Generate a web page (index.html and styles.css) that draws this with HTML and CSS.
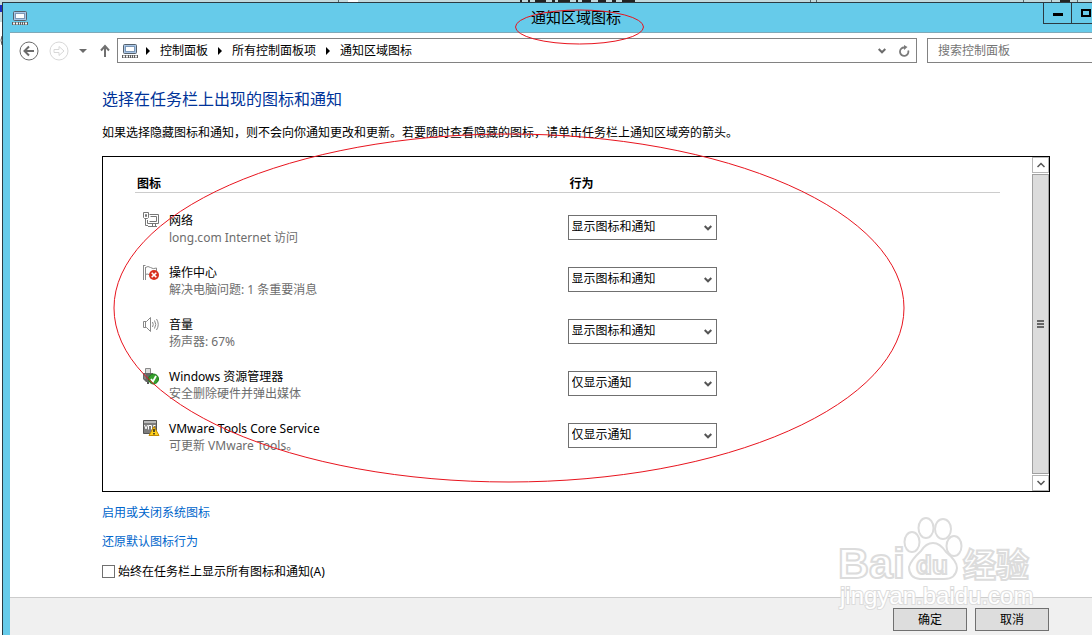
FILE: index.html
```html
<!DOCTYPE html>
<html lang="zh-CN">
<head>
  <meta charset="UTF-8">
  <meta name="viewport" content="width=device-width, initial-scale=1.0">
  <title>通知区域图标</title>
  <link rel="stylesheet" href="styles.css">
</head>
<body>
  <!-- shared icon shapes -->
  <svg class="sprite" width="0" height="0" aria-hidden="true">
    <symbol id="i-taskbar" viewBox="0 0 18 16">
      <rect x="2.5" y="1.5" width="13" height="9" rx="1" fill="#a9c6e6" stroke="#56616c"/>
      <rect x="4.5" y="3.5" width="9" height="5" fill="#fff" stroke="#7c98b8"/>
      <rect x="1" y="12" width="16" height="3" fill="#5c5c5c"/>
      <path d="M2 13.500h2M5 13.500h2M8 13.500h1M10 13.500h1M12 13.500h1M14 13.500h2" stroke="#f4f4f4" stroke-width="2"/>
    </symbol>
    <symbol id="i-chevron" viewBox="0 0 8 6">
      <path d="M0.700 1L4 4.300L7.300 1" fill="none" stroke="currentColor" stroke-width="2"/>
    </symbol>
    <symbol id="i-thin" viewBox="0 0 8 6">
      <path d="M0.500 1L4 4.500L7.500 1" fill="none" stroke="currentColor" stroke-width="1.500"/>
    </symbol>
    <symbol id="i-crumb" viewBox="0 0 4 8">
      <path d="M0 0L4 4L0 8Z"/>
    </symbol>
  </svg>

  <!-- slivers of the window behind -->
  <svg class="behind" width="100%" height="100%" aria-hidden="true">
    <path d="M338.500 0V2M810.500 0V2M816.500 0V2M1023.500 0V2M1051.500 0V2M1077.500 0V2" stroke="#55676c"/>
    <path d="M348 0h10v2h-10z" fill="#fff"/>
    <path d="M520 1h2M528 1h2M535 1h11M552 1h3M558 1h12M576 1h2M582 1h9M598 1h8M612 1h4M622 1h13M1060 1h10" stroke="#222" stroke-width="2"/>
    <path d="M0 22h2v613H0z" fill="#fff"/>
    <path d="M0 5h2v7H0z" fill="#1b2fc0"/>
    <path d="M2 36Q0 40 2 45" fill="none" stroke="#555"/>
  </svg>

  <div class="window">
    <header class="titlebar">
      <svg class="icon-18" width="18" height="16"><use href="#i-taskbar"/></svg>
      <h1>通知区域图标</h1>
      <div class="controls">
        <button type="button" aria-label="最小化"><svg width="12" height="8"><path d="M1 4h10v3H1z"/></svg></button>
        <button type="button" aria-label="最大化"><svg width="12" height="8"><path d="M2 1h8v6H2z" fill="none" stroke="#000" stroke-width="2"/></svg></button>
        <button type="button" class="close" aria-label="关闭"><svg width="12" height="8"><path d="M2 0L10 8M10 0L2 8" stroke="#000" stroke-width="2"/></svg></button>
      </div>
    </header>

    <div class="client">
      <nav class="navbar">
        <button type="button" class="nav-btn" aria-label="后退">
          <svg width="20" height="20" fill="none"><circle cx="10" cy="10" r="9" stroke="#6b6b6b"/><path d="M15 10H6M10 5.500L5.500 10L10 14.500" stroke="#6b6b6b" stroke-width="2"/></svg>
        </button>
        <button type="button" class="nav-btn" aria-label="前进">
          <svg width="20" height="20" fill="none" stroke="#d8d8d8"><circle cx="10" cy="10" r="9"/><path d="M5 8.500h5V5.500L15 10L10 14.500V11.500H5z"/></svg>
        </button>
        <button type="button" class="nav-btn" aria-label="最近浏览的位置">
          <svg width="8" height="4"><path d="M0 0h8L4 4z" fill="#6b6b6b"/></svg>
        </button>
        <button type="button" class="nav-btn up" aria-label="上移">
          <svg width="12" height="14" fill="none" stroke="#707070" stroke-width="2"><path d="M6 13V3M2 6.500L6 2L10 6.500"/></svg>
        </button>
        <div class="address">
          <svg class="icon-18" width="18" height="16"><use href="#i-taskbar"/></svg>
          <svg class="crumb" width="4" height="8"><use href="#i-crumb"/></svg>
          <a href="#">控制面板</a>
          <svg class="crumb" width="4" height="8"><use href="#i-crumb"/></svg>
          <a href="#">所有控制面板项</a>
          <svg class="crumb" width="4" height="8"><use href="#i-crumb"/></svg>
          <a href="#">通知区域图标</a>
          <div class="address-tools">
            <button type="button" aria-label="以前的位置"><svg width="8" height="6"><use href="#i-chevron"/></svg></button>
            <button type="button" aria-label="刷新">
              <svg width="12" height="12" fill="none"><path d="M6.500 2.500A4.200 4.200 0 1 0 10.200 5.500" stroke="#7a7a7a" stroke-width="1.800"/><path d="M6 0v5L9.500 2z" fill="#7a7a7a"/></svg>
            </button>
          </div>
        </div>
        <input class="search" type="search" placeholder="搜索控制面板" aria-label="搜索控制面板">
      </nav>

      <main>
        <h2>选择在任务栏上出现的图标和通知</h2>
        <p class="intro">如果选择隐藏图标和通知，则不会向你通知更改和更新。若要随时查看隐藏的图标，请单击任务栏上通知区域旁的箭头。</p>

        <div class="list">
          <div class="list-body">
            <table>
              <thead>
                <tr><th>图标</th><th>行为</th></tr>
              </thead>
              <tbody>
                <tr>
                  <td>
                    <div class="item">
                      <svg width="18" height="18" fill="none" stroke="#777"><path d="M7.500 2.500H16.500V11.500H5.500V8M10.500 11.500V14.500M13.500 11.500V14.500M6 14.500H15M8.500 4.500h6v5h-7"/><path d="M1.500 0.500h5v5l-1 1h-3l-1-1zM3.500 2.500h1v2h-1zM3.500 6.500V13.500H6"/></svg>
                      <label for="s1">网络<small>long.com Internet 访问</small></label>
                    </div>
                  </td>
                  <td><div class="pick"><select id="s1"><option>显示图标和通知</option><option>仅显示通知</option></select><svg width="8" height="6"><use href="#i-chevron"/></svg></div></td>
                </tr>
                <tr>
                  <td>
                    <div class="item">
                      <svg width="18" height="18" fill="none"><path d="M1.500 1V16M3.500 3V16M1.500 1.500h2M3.500 3.500Q6 1.500 8.500 3.500T14.500 4V9M3.500 10.500Q5 9.500 7 10.500" stroke="#8a8a8a"/><circle cx="12" cy="11" r="5" fill="#d8301f"/><path d="M9.700 8.700L14.300 13.300M14.300 8.700L9.700 13.300" stroke="#fff" stroke-width="1.600"/></svg>
                      <label for="s2">操作中心<small>解决电脑问题: 1 条重要消息</small></label>
                    </div>
                  </td>
                  <td><div class="pick"><select id="s2"><option>显示图标和通知</option><option>仅显示通知</option></select><svg width="8" height="6"><use href="#i-chevron"/></svg></div></td>
                </tr>
                <tr>
                  <td>
                    <div class="item">
                      <svg width="18" height="18" fill="none" stroke="#888"><path d="M1.500 5.500H4.500L8.500 1.500V15.500L4.500 11.500H1.500zM3.500 6V11"/><path d="M10.500 6Q12 8.500 10.500 11M12.500 4.500Q15 8.500 12.500 12.500M14.500 3Q18 8.500 14.500 14"/></svg>
                      <label for="s3">音量<small>扬声器: 67%</small></label>
                    </div>
                  </td>
                  <td><div class="pick"><select id="s3"><option>显示图标和通知</option><option>仅显示通知</option></select><svg width="8" height="6"><use href="#i-chevron"/></svg></div></td>
                </tr>
                <tr>
                  <td>
                    <div class="item">
                      <svg width="18" height="18" fill="none"><path d="M3.500 0.500h5v5h-5z" fill="#ddd" stroke="#888"/><path d="M1 5h10v6l-3 3H4l-3-3z" fill="#666"/><path d="M5 14h2v2H5z" fill="#555"/><path d="M3 6v5" stroke="#999"/><circle cx="11.500" cy="11" r="5" fill="#35a02c" stroke="#1d7c1a"/><path d="M9 11L11 13.500L14 8" stroke="#fff" stroke-width="1.800"/></svg>
                      <label for="s4">Windows 资源管理器<small>安全删除硬件并弹出媒体</small></label>
                    </div>
                  </td>
                  <td><div class="pick"><select id="s4"><option>仅显示通知</option><option>显示图标和通知</option></select><svg width="8" height="6"><use href="#i-chevron"/></svg></div></td>
                </tr>
                <tr>
                  <td>
                    <div class="item">
                      <svg width="18" height="18" fill="none"><path d="M1.500 0.500h13v13h-13z" fill="#7d7d7d" stroke="#555"/><path d="M2 1h12v2H2z" fill="#bbb"/><path d="M2.500 5L4 9L5.500 5M6.500 9.500V5.500h3V9.500M11.500 9V5.500h2" stroke="#fff"/><path d="M12 6.500L17 15.500H7z" fill="#ffd21f" stroke="#c48a00"/><path d="M12 9v3M12 13v1.500" stroke="#222" stroke-width="1.500"/></svg>
                      <label for="s5">VMware Tools Core Service<small>可更新 VMware Tools。</small></label>
                    </div>
                  </td>
                  <td><div class="pick"><select id="s5"><option>仅显示通知</option><option>显示图标和通知</option></select><svg width="8" height="6"><use href="#i-chevron"/></svg></div></td>
                </tr>
              </tbody>
            </table>
          </div>
          <div class="scrollbar">
            <button type="button" class="scroll-up" aria-label="向上滚动"><svg width="8" height="6"><use href="#i-thin"/></svg></button>
            <div class="thumb"><svg width="7" height="8"><path d="M0 1h7M0 4h7M0 7h7" stroke="#666" stroke-width="2"/></svg></div>
            <button type="button" aria-label="向下滚动"><svg width="8" height="6"><use href="#i-thin"/></svg></button>
          </div>
        </div>

        <div class="links">
          <a href="#">启用或关闭系统图标</a>
          <a href="#">还原默认图标行为</a>
        </div>
        <div class="always">
          <input type="checkbox" id="always">
          <label for="always">始终在任务栏上显示所有图标和通知(A)</label>
        </div>
      </main>

      <footer>
        <button type="button">确定</button>
        <button type="button">取消</button>
      </footer>
    </div>
  </div>

  <!-- watermark -->
  <svg class="watermark" width="200" height="100" aria-hidden="true">
    <g class="mark">
      <text x="1" y="62" font-size="43">Bai</text>
      <ellipse cx="75" cy="26" rx="7.500" ry="10"/>
      <ellipse cx="89" cy="12" rx="7.500" ry="10"/>
      <ellipse cx="106" cy="13" rx="8" ry="10"/>
      <ellipse cx="117" cy="30" rx="7.500" ry="10"/>
      <path d="M96 27Q103 27 109 36Q120 45 120 52Q119 63 107 63H83Q72 62 72 51Q74 44 84 35Q89 27 96 27z"/>
      <text x="79" y="58" font-size="26">du</text>
      <text x="126" y="61" font-size="33">经验</text>
      <text class="site" x="3" y="88" font-size="24">jingyan.baidu.com</text>
    </g>
  </svg>

  <!-- red marker rings -->
  <svg class="rings" width="910" height="490" aria-hidden="true">
    <ellipse cx="579.500" cy="27" rx="64" ry="17"/>
    <ellipse cx="509" cy="308" rx="395" ry="174"/>
  </svg>
</body>
</html>
```
FILE: styles.css
```css
* {
  margin: 0;
  padding: 0;
  box-sizing: border-box;
}

body {
  position: relative;
  display: flex;
  height: 100vh;
  padding: 2px 0 0 2px;
  overflow: hidden;
  background: #c3d9dd;
  color: #000;
  font-family: "Noto Sans", "Noto Sans CJK SC", sans-serif;
  font-size: 12px;
  line-height: 18px;
}

button, input, select {
  font: inherit;
  color: inherit;
}

button {
  display: flex;
  align-items: center;
  justify-content: center;
  border: none;
  background: none;
}

a {
  text-decoration: none;
}

svg {
  display: block;
  flex: none;
}

.sprite, .behind, .watermark, .rings {
  position: absolute;
  top: 0;
  left: 0;
  pointer-events: none;
}

/* the window runs off the right and bottom edges */
.window {
  position: relative;
  flex: none;
  display: flex;
  flex-direction: column;
  width: calc(100% + 58px);
  padding: 0 8px 0 7px;
  border-top: 1px solid #2b3a42;
  border-left: 1px solid #2b3a42;
  background: #66cbea;
}

.titlebar {
  display: grid;
  grid-template-columns: 1fr auto 1fr;
  align-items: start;
  height: 29px;
}

.titlebar .icon-18 {
  margin: 7px 0 0 1px;
}

.titlebar h1 {
  padding-top: 2px;
  font-size: 15px;
  font-weight: 400;
  line-height: 24px;
}

.controls {
  display: flex;
  justify-content: flex-end;
}

.controls button {
  width: 28px;
  height: 21px;
  border: 1px solid #2b3a42;
  border-top: none;
  border-right: none;
}

.controls .close {
  width: 43px;
}

.client {
  flex: 1;
  display: flex;
  flex-direction: column;
  border-top: 1px solid #7fa9b8;
  background: #fff;
}

.navbar {
  display: flex;
  align-items: center;
  padding: 5px 5px 0 9px;
  color: #6b6b6b;
}

.nav-btn {
  margin-right: 10px;
}

.nav-btn.up {
  margin: 0 6px 0 2px;
}

.address {
  flex: 1;
  display: flex;
  align-items: center;
  height: 25px;
  padding: 0 6px 0 3px;
  border: 1px solid #828282;
}

.address a {
  color: #000;
}

.crumb {
  margin: 0 10px;
  fill: #000;
}

.address .icon-18 + .crumb {
  margin-left: 7px;
}

.address-tools {
  display: flex;
  gap: 12px;
  margin-left: auto;
}

.search {
  width: 210px;
  height: 25px;
  margin-left: 10px;
  padding: 0 10px;
  border: 1px solid #828282;
  border-radius: 0;
  background: #fff;
  appearance: none;
}

.search::placeholder {
  color: #757575;
}

main {
  flex: 1;
  padding: 24px 92px 0;
}

h2 {
  margin-bottom: 13px;
  color: #003399;
  font-size: 16px;
  font-weight: 400;
  line-height: 24px;
}

.intro {
  margin-bottom: 14px;
}

.list {
  display: flex;
  border: 1px solid #000;
}

.list-body {
  flex: 1;
  padding: 18px 32px 36px;
}

table {
  width: 100%;
  table-layout: fixed;
  border-collapse: collapse;
}

th {
  padding: 0 2px;
  border-bottom: 1px solid #ccc;
  font-weight: 700;
  line-height: 17px;
  text-align: left;
}

tbody td {
  height: 52px;
  vertical-align: bottom;
}

tbody tr:first-child td {
  height: 54px;
}

.item {
  display: flex;
  gap: 9px;
  padding: 0 0 1px 7px;
  line-height: 17px;
}

.item small {
  display: block;
  color: #6d6d6d;
  font-size: 12px;
}

.pick {
  position: relative;
  width: 149px;
  margin-bottom: 7px;
  color: #555;
}

.pick select {
  display: block;
  width: 100%;
  height: 25px;
  padding: 0 20px 0 3px;
  border: 1px solid #707070;
  border-radius: 0;
  background: #fff;
  color: #000;
  appearance: none;
}

.pick svg {
  position: absolute;
  top: 10px;
  right: 5px;
  pointer-events: none;
}

.scrollbar {
  display: flex;
  flex-direction: column;
  gap: 1px;
  width: 17px;
  color: #555;
}

.scrollbar button {
  height: 16px;
  border: 1px solid #b5b5b5;
}

.scroll-up svg {
  transform: rotate(180deg);
}

.thumb {
  flex: 1;
  display: flex;
  align-items: center;
  justify-content: center;
  border: 1px solid #a0a0a0;
  background: #dcdcdc;
}

.links {
  display: flex;
  flex-direction: column;
  align-items: flex-start;
  gap: 11px;
  margin-top: 12px;
}

.links a {
  color: #0066cc;
}

.always {
  display: flex;
  align-items: center;
  gap: 3px;
  margin-top: 12px;
}

.always input {
  width: 13px;
  height: 13px;
  border: 1px solid #707070;
  background: #fff;
  appearance: none;
}

footer {
  display: flex;
  gap: 8px;
  justify-content: flex-end;
  padding: 10px 93px 4px;
  border-top: 1px solid #ccc;
  background: #f0f0f0;
}

footer button {
  width: 74px;
  height: 23px;
  border: 1px solid #707070;
  background: #ddd;
}

.watermark {
  top: auto;
  left: auto;
  right: 55px;
  bottom: 19px;
}

.mark {
  fill: #fff;
  stroke: #dcdcdc;
  stroke-width: 2px;
  font-family: "Liberation Sans", "Noto Sans CJK SC", sans-serif;
  font-weight: 700;
}

.mark .site {
  font-weight: 400;
  paint-order: stroke;
}

.rings {
  fill: none;
  stroke: #e8141e;
  stroke-width: 1px;
}
```
